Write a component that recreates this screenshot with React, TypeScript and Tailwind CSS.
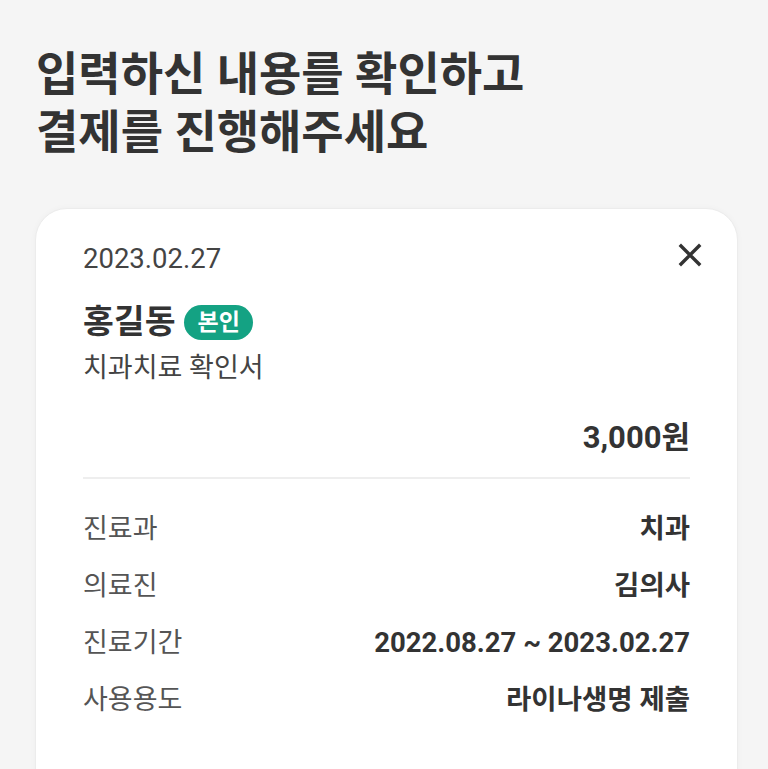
import React from "react";

const font = { fontFamily: 'Roboto, "Noto Sans CJK KR", "Noto Sans", sans-serif' };

function Row({ label, value }: { label: string; value: string }) {
  return (
    <div className="flex items-center justify-between h-[36px]">
      <span className="text-[27px] text-[#555555] leading-[36px]">{label}</span>
      <span className="text-[27.5px] font-bold text-[#333333] leading-[36px]">{value}</span>
    </div>
  );
}

export default function App() {
  return (
    <div className="w-[768px] h-[769px] overflow-hidden bg-[#f5f5f5]" style={font}>
      <div className="pl-[35px] pt-[45px]">
        <h1 className="pl-[1px] text-[46px] font-bold leading-[58px] text-[#333333]">
          입력하신 내용를 확인하고
          <br />
          결제를 진행해주세요
        </h1>
        <div className="mt-[47px] w-[703px] h-[600px] bg-white rounded-[32px] border border-[#ececec] shadow-[0_0_6px_rgba(0,0,0,0.03)] px-[47px] pt-[32px]">
          <div className="flex items-center justify-between h-[36px]">
            <span className="text-[27.5px] text-[#444444] leading-[36px]">2023.02.27</span>
            <svg width="24" height="24" viewBox="0 0 24 24" className="-mr-[12px] -mt-[8px]">
              <path d="M3 3 L21 21 M21 3 L3 21" stroke="#333333" strokeWidth="3.4" strokeLinecap="square" />
            </svg>
          </div>
          <div className="mt-[27px] flex items-center gap-[9px] h-[36px]">
            <span className="text-[33.5px] font-bold text-[#333333] leading-[36px]">홍길동</span>
            <span className="h-[35px] px-[13px] rounded-full bg-[#14a283] text-white text-[23px] font-bold leading-[35px]">
              본인
            </span>
          </div>
          <div className="mt-[11px] text-[27px] text-[#444444] leading-[34px]">치과치료 확인서</div>
          <div className="mt-[35px] text-right text-[31px] font-bold text-[#333333] leading-[36px]">
            3,000원
          </div>
          <div className="mt-[21px] h-[2px] bg-[#eeeeee]" />
          <div className="mt-[32px] flex flex-col gap-[21px]">
            <Row label="진료과" value="치과" />
            <Row label="의료진" value="김의사" />
            <Row label="진료기간" value="2022.08.27 ~ 2023.02.27" />
            <Row label="사용용도" value="라이나생명 제출" />
          </div>
        </div>
      </div>
    </div>
  );
}
